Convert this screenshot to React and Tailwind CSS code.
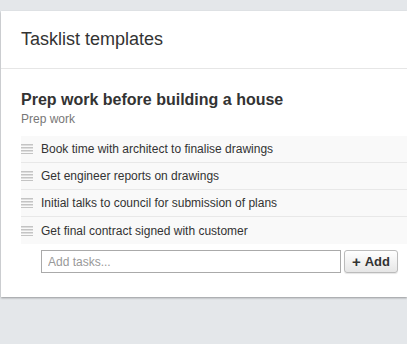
import React from "react";

const tasks = [
  "Book time with architect to finalise drawings",
  "Get engineer reports on drawings",
  "Initial talks to council for submission of plans",
  "Get final contract signed with customer",
];

const Handle = () => (
  <svg width="12" height="10" viewBox="0 0 12 10" className="shrink-0">
    <rect x="0" y="0" width="12" height="1.5" fill="#c4c4c4" />
    <rect x="0" y="3" width="12" height="1.5" fill="#c4c4c4" />
    <rect x="0" y="6" width="12" height="1.5" fill="#c4c4c4" />
    <rect x="0" y="9" width="12" height="1" fill="#c4c4c4" />
  </svg>
);

export default function App() {
  return (
    <div
      className="h-[344px] w-[407px] bg-[#e4e7ea] pt-[11px] pl-px overflow-hidden"
      style={{ fontFamily: '"Liberation Sans", Arial, sans-serif' }}
    >
      <div className="bg-white shadow-[0_1px_2px_rgba(0,0,0,0.35)]">
        <div className="h-[58px] flex items-center px-5 border-b border-[#e6e6e6] text-[18px] text-[#333]">
          Tasklist templates
        </div>
        <div className="pl-5 pt-[21px] pb-[24px]">
          <h3 className="text-[16px] font-bold text-[#333] leading-[20px]">
            Prep work before building a house
          </h3>
          <p className="text-[12px] text-[#777] leading-[16px] mt-px">Prep work</p>
          <ul className="mt-[9px]">
            {tasks.map((t) => (
              <li
                key={t}
                className="h-[27px] flex items-center gap-2 bg-[#f9f9f9] border-b border-[#e8e8e8] last:border-b-0 text-[12px] text-[#333]"
              >
                <Handle />
                <span>{t}</span>
              </li>
            ))}
          </ul>
          <div className="flex items-center gap-[3px] pl-5 mt-[6px]">
            <input
              placeholder="Add tasks..."
              className="w-[300px] h-[23px] border border-[#aaa] px-[6px] text-[12px] text-[#333] placeholder:text-[#999] outline-none"
            />
            <button className="h-[23px] w-[54px] flex items-center justify-center gap-1 rounded-[3px] border border-[#bbb] bg-gradient-to-b from-white to-[#e6e6e6] text-[13px] font-bold text-[#333] shadow-[0_1px_1px_rgba(0,0,0,0.1)]">
              <span className="text-[15px] leading-none">+</span>
              Add
            </button>
          </div>
        </div>
      </div>
    </div>
  );
}
